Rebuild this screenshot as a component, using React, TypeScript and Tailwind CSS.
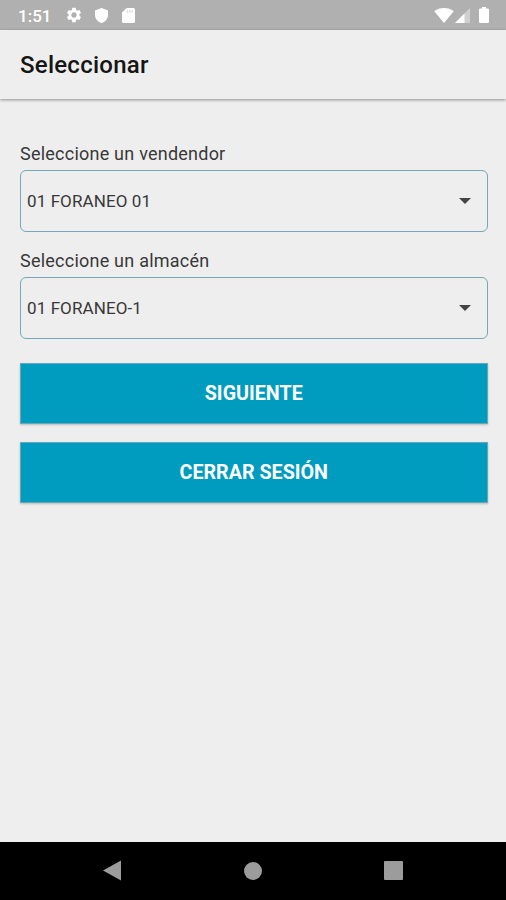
import { ReactNode } from 'react'
import { MdSettings } from 'react-icons/md'

interface ISelectFieldProps {
  label: string
  value: string
}

interface IActionButtonProps {
  children: ReactNode
}

function StatusBar() {
  return (
    <div className="flex justify-between items-center pr-[17px] pl-[18px] h-[30px] bg-[#b0b0b0] text-white shrink-0">
      <div className="flex items-center">
        <span className="w-[47px] text-[17px] leading-[30px] font-medium pt-px">1:51</span>
        <MdSettings className="w-[18px] h-[18px]" />
        <svg className="ml-3 w-[13px] h-[15px]" viewBox="0 0 13 15" fill="currentColor">
          <path d="M6.5 0 13 2.6V7c0 3.7-2.7 6.900-6.500 8C2.700 13.900 0 10.700 0 7V2.600z" />
        </svg>
        <svg className="ml-[14px] w-[13px] h-[15px]" viewBox="0 0 13 15" fill="currentColor">
          <path d="M4.6 0h6.900A1.500 1.500 0 0 1 13 1.500v12a1.500 1.500 0 0 1-1.500 1.500h-10A1.500 1.500 0 0 1 0 13.500V4.600z" />
          <path d="M4.8 1.900h1.400v2.800H4.800zM7.200 1.900h1.400v2.800H7.200zM9.600 1.900H11v2.800H9.600z" fill="#b0b0b0" opacity="0.4" />
        </svg>
      </div>
      <div className="flex items-center">
        <svg className="w-5 h-[15px]" viewBox="0 0 20 15" fill="currentColor">
          <path d="M10 15 .3 3.200C3 1.100 6.300 0 10 0s7 1.100 9.700 3.200z" />
        </svg>
        <svg className="ml-px w-[15px] h-[15px] mt-px" viewBox="0 0 15 15" fill="currentColor">
          <path d="M15 0v15H0z" opacity="0.4" />
          <path d="M9.500 5.500V15H0z" />
        </svg>
        <svg className="ml-[9px] w-[10px] h-4" viewBox="0 0 10 16" fill="currentColor">
          <path d="M3 0h4v1.600h2a1 1 0 0 1 1 1V15a1 1 0 0 1-1 1H1a1 1 0 0 1-1-1V2.600a1 1 0 0 1 1-1h2z" />
        </svg>
      </div>
    </div>
  )
}

function SelectField({ label, value }: ISelectFieldProps) {
  return (
    <div className="flex flex-col">
      <label className="h-[31px] text-[18px] leading-[29px] tracking-[0.23px] text-[#383838]">{label}</label>
      <button
        type="button"
        className="flex justify-between items-center pr-4 pl-[6px] h-[62px] rounded-md border-[1.5px] border-[#76a6b8] text-[17px] text-[#383838]"
      >
        <span className="pt-[2px] tracking-[0.1px]">{value}</span>
        <svg className="w-3 h-[6px]" viewBox="0 0 12 6" fill="#444444">
          <path d="M0 0h12L6 6z" />
        </svg>
      </button>
    </div>
  )
}

function ActionButton({ children }: IActionButtonProps) {
  return (
    <button
      type="button"
      className="pt-px h-[61px] border border-[#68a9b9] bg-[#009cc0] text-[19.7px] font-bold text-white shadow-[0_1px_2px_rgba(0,0,0,0.22)]"
    >
      {children}
    </button>
  )
}

function NavigationBar() {
  return (
    <div className="flex justify-between items-center pr-[103px] pb-px pl-[103px] h-[58px] bg-black shrink-0">
      <svg className="w-[19px] h-[21px]" viewBox="0 0 19 21" fill="#9c9c9c">
        <path d="M18 .5v20L0 10.500z" />
      </svg>
      <div className="w-[18px] h-[18px] rounded-full bg-[#9c9c9c]" />
      <div className="w-[19px] h-[19px] rounded-[1px] bg-[#9c9c9c]" />
    </div>
  )
}

export default function App() {
  return (
    <div className="flex flex-col w-[506px] h-[900px] overflow-hidden bg-[#eeeeee] font-['Roboto',sans-serif]">
      <StatusBar />
      <header className="flex items-center px-5 pt-px h-[69px] shrink-0 shadow-[0_1px_3px_rgba(0,0,0,0.4)]">
        <h1 className="text-[24px] font-medium tracking-[0.25px] text-[#151515]">Seleccionar</h1>
      </header>
      <main className="flex flex-col flex-1 pt-10 pr-[18.5px] pl-5">
        <div className="flex flex-col gap-[14px]">
          <SelectField label="Seleccione un vendendor" value="01 FORANEO 01" />
          <SelectField label="Seleccione un almacén" value="01 FORANEO-1" />
        </div>
        <div className="flex flex-col gap-[18px] mt-6">
          <ActionButton>SIGUIENTE</ActionButton>
          <ActionButton>CERRAR SESIÓN</ActionButton>
        </div>
      </main>
      <NavigationBar />
    </div>
  )
}
